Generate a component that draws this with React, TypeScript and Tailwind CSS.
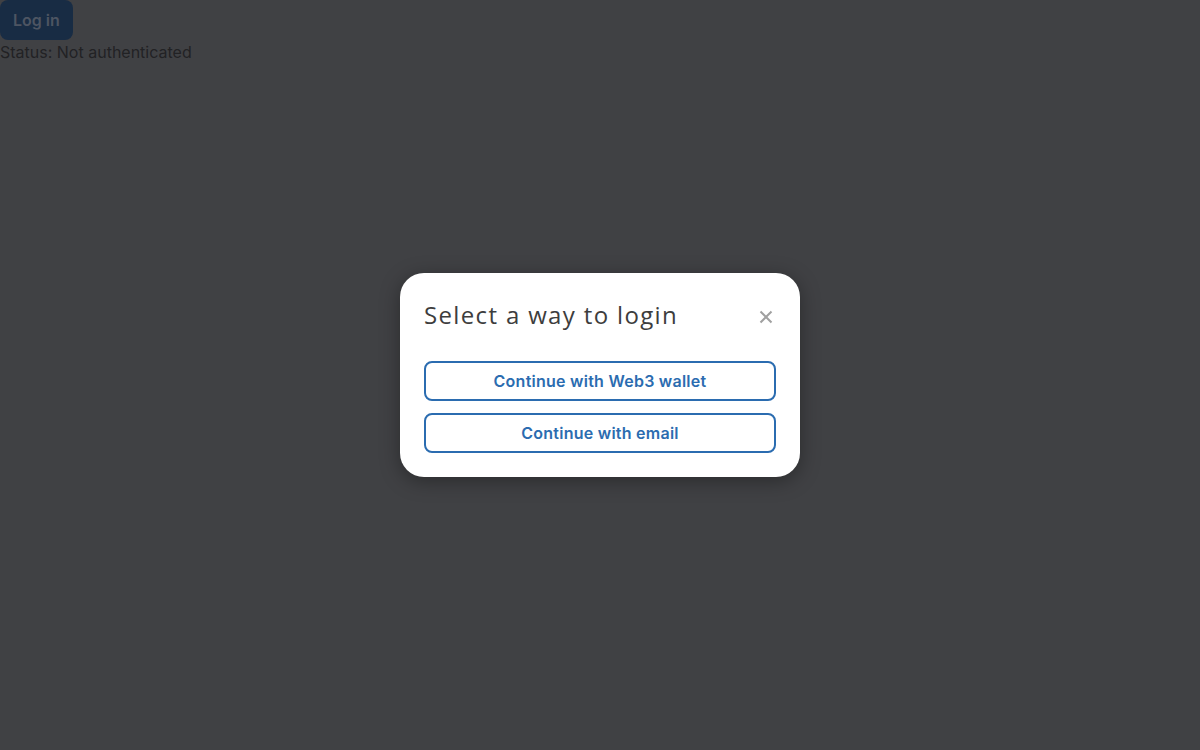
import React from "react";

export default function App() {
  return (
    <div className="relative w-[1200px] h-[750px] bg-[#404144] overflow-hidden" style={{ fontFamily: "Inter, sans-serif" }}>
      <div className="flex flex-col items-start">
        <button className="h-10 px-[13px] rounded-lg bg-[#182c44] text-[#4d5562] font-semibold text-base leading-6">Log in</button>
        <div className="text-base leading-6 text-[#222224]">Status: Not authenticated</div>
      </div>
      <div className="absolute inset-0 flex items-center justify-center">
        <div className="w-[400px] bg-white rounded-3xl p-6 shadow-[0_4px_20px_rgba(0,0,0,0.35)]">
          <div className="flex items-center justify-between h-9 mb-7">
            <h2 className="text-[24px] leading-9 text-[#3d3d3d] tracking-[1.35px]" style={{ fontFamily: "'Open Sans', Lato, sans-serif" }}>Select a way to login</h2>
            <svg width="14" height="14" viewBox="0 0 14 14" className="mr-[3px] mt-[4px]">
              <path d="M1.5 1.5 L12.5 12.5 M12.5 1.5 L1.5 12.5" stroke="#a0a0a0" strokeWidth="2" strokeLinecap="butt" />
            </svg>
          </div>
          <div className="flex flex-col gap-3">
            <button className="h-10 w-full rounded-lg border-2 border-[#2b6cb0] text-[#2b6cb0] font-semibold text-base tracking-[0.25px]">Continue with Web3 wallet</button>
            <button className="h-10 w-full rounded-lg border-2 border-[#2b6cb0] text-[#2b6cb0] font-semibold text-base tracking-[0.25px]">Continue with email</button>
          </div>
        </div>
      </div>
    </div>
  );
}
